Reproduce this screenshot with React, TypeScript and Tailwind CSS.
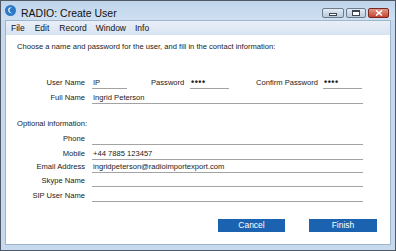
import React from 'react';

const font = { fontFamily: '"Liberation Sans", Arial, sans-serif' };

const Field: React.FC<{ w: string; value?: string; dots?: boolean }> = ({ w, value, dots }) => (
    <div className={`${w} h-full border-b border-[#a3a3a3] flex items-end pl-[1px] pb-[1px] leading-none`}>
        {dots ? (
            <span className="text-[9px] font-bold tracking-[0.5px] text-[#222]">••••</span>
        ) : (
            <span className="text-[#1a1a1a]">{value}</span>
        )}
    </div>
);

const Row: React.FC<{ label: string; value?: string; h: string }> = ({ label, value, h }) => (
    <div className={`flex items-end ${h}`}>
        <div className="w-[79px] text-right leading-none pb-[2px] text-[#222]">{label}</div>
        <div className="ml-[7px] h-full flex">
            <Field w="w-[271px]" value={value} />
        </div>
    </div>
);

const App: React.FC = () => {
    return (
        <div className="w-[396px] h-[251px] bg-[#c6d9ee] border border-[#4f5a66] flex flex-col text-[7.6px]" style={font}>
            {/* Title bar */}
            <div className="h-[19px] flex items-start bg-gradient-to-b from-[#bfd4ea] to-[#cfe0f2]">
                <div className="ml-[4px] mt-[4px] w-[11px] h-[11px] rounded-full bg-[#2c79c6] flex items-center justify-center">
                    <svg width="9" height="9" viewBox="0 0 10 10">
                        <path d="M2.5 3.5 C2 6 4 8.5 7 8 C5 7.5 3.5 6 3.8 3.8 C4 2.5 5.5 1.8 7 2.2 C5.5 1 3 1.5 2.5 3.5 Z" fill="#ffffff" />
                    </svg>
                </div>
                <div className="ml-[5px] mt-[7px] text-[10.5px] leading-none text-[#111]">RADIO: Create User</div>
                <div className="ml-auto mr-[6px] mt-[7px] flex gap-[2px]">
                    <div className="w-[22px] h-[10px] rounded-[2px] border border-[#6d7c8c] bg-gradient-to-b from-[#e3ebf4] to-[#b9c9db] flex items-center justify-center">
                        <div className="w-[8px] h-[3px] border border-[#3c4652] bg-white mt-[2px]"></div>
                    </div>
                    <div className="w-[20px] h-[10px] rounded-[2px] border border-[#6d7c8c] bg-gradient-to-b from-[#e3ebf4] to-[#b9c9db] flex items-center justify-center">
                        <div className="w-[8px] h-[6px] border border-[#3c4652] border-t-2 bg-white"></div>
                    </div>
                    <div className="w-[21px] h-[10px] rounded-[2px] border border-[#7a2a22] bg-gradient-to-b from-[#e0978a] to-[#c4422f] flex items-center justify-center">
                        <svg width="8" height="6" viewBox="0 0 8 6">
                            <path d="M1 0.5 L7 5.5 M7 0.5 L1 5.5" stroke="#ffffff" strokeWidth="1.6" />
                        </svg>
                    </div>
                </div>
            </div>

            {/* Inner window */}
            <div className="flex-1 mx-[4px] mb-[5px] flex flex-col border border-[#9fb5cc]">
                {/* Menu bar */}
                <div className="h-[14px] bg-gradient-to-b from-[#e9eff8] to-[#d9e3f1] flex items-center text-[8.5px] text-[#111] leading-none">
                    <span className="ml-[5px]">File</span>
                    <span className="ml-[10px]">Edit</span>
                    <span className="ml-[10px]">Record</span>
                    <span className="ml-[9px]">Window</span>
                    <span className="ml-[9px]">Info</span>
                </div>

                {/* Content */}
                <div className="flex-1 bg-white flex flex-col pt-[7px]">
                    <div className="ml-[11px] leading-[10px] text-[#222]">
                        Choose a name and password for the user, and fill in the contact information:
                    </div>

                    <div className="mt-[23px] flex items-end h-[14px]">
                        <div className="w-[79px] text-right leading-none pb-[2px] text-[#222]">User Name</div>
                        <div className="ml-[7px] h-full flex">
                            <Field w="w-[35px]" value="IP" />
                        </div>
                        <div className="ml-[24px] w-[32px] leading-none pb-[2px] text-[#222] whitespace-nowrap">Password</div>
                        <div className="ml-[7px] h-full flex">
                            <Field w="w-[39px]" dots />
                        </div>
                        <div className="ml-[27px] w-[60px] leading-none pb-[2px] text-[#222] whitespace-nowrap">Confirm Password</div>
                        <div className="ml-[7px] h-full flex">
                            <Field w="w-[39px]" dots />
                        </div>
                    </div>
                    <div className="mt-[1px]">
                        <Row label="Full Name" value="Ingrid Peterson" h="h-[14px]" />
                    </div>

                    <div className="mt-[15px] ml-[11px] leading-[10px] text-[#222]">Optional information:</div>

                    <div className="mt-[2px] flex flex-col">
                        <Row label="Phone" h="h-[14px]" />
                        <Row label="Mobile" value="+44 7885 123457" h="h-[15px]" />
                        <Row label="Email Address" value="ingridpeterson@radioimportexport.com" h="h-[13px]" />
                        <Row label="Skype Name" h="h-[14px]" />
                        <Row label="SIP User Name" h="h-[15px]" />
                    </div>

                    <div className="mt-[17px] flex justify-end gap-[24px] pr-[13px]">
                        <button className="w-[67px] h-[13px] bg-[#1b63b0] text-white text-[8.5px] leading-none">Cancel</button>
                        <button className="w-[68px] h-[13px] bg-[#1b63b0] text-white text-[8.5px] leading-none">Finish</button>
                    </div>
                </div>
            </div>
        </div>
    );
};

export default App;
